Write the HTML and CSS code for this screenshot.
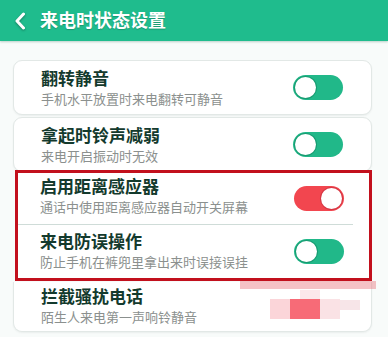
FILE: index.html
```html
<!DOCTYPE html>
<html lang="zh-CN">
<head>
<meta charset="utf-8">
<link rel="stylesheet" href="styles.css">
</head>
<body>
<div class="screen">
  <header class="topbar">
    <svg class="back" width="12" height="18" viewBox="0 0 12 18"><path d="M9.5 2 L3 9 L9.5 16" fill="none" stroke="#fff" stroke-width="3" stroke-linecap="round" stroke-linejoin="round"/></svg>
    <span class="title">来电时状态设置</span>
  </header>
  <main class="list">
    <div class="card row r1">
      <div class="texts"><div class="name">翻转静音</div><div class="desc">手机水平放置时来电翻转可静音</div></div>
      <span class="toggle"><span class="knob"></span></span>
    </div>
    <div class="card row r2">
      <div class="texts"><div class="name">拿起时铃声减弱</div><div class="desc">来电开启振动时无效</div></div>
      <span class="toggle"><span class="knob"></span></span>
    </div>
    <div class="marked">
      <div class="row r3">
        <div class="texts"><div class="name">启用距离感应器</div><div class="desc">通话中使用距离感应器自动开关屏幕</div></div>
        <span class="toggle on"><span class="knob"></span></span>
      </div>
      <div class="sep"></div>
      <div class="row r4">
        <div class="texts"><div class="name">来电防误操作</div><div class="desc">防止手机在裤兜里拿出来时误接误挂</div></div>
        <span class="toggle"><span class="knob"></span></span>
      </div>
    </div>
    <div class="card row r5">
      <div class="texts"><div class="name">拦截骚扰电话</div><div class="desc">陌生人来电第一声响铃静音</div></div>
    </div>
  </main>
  <div class="mosaic">
    <span class="m band"></span>
    <span class="m b1"></span>
    <span class="m b2"></span>
    <span class="m b3"></span>
    <span class="m b4"></span>
    <span class="m b5"></span>
  </div>
</div>
</body>
</html>
```

FILE: styles.css
```css
* { box-sizing: border-box; }
html, body { margin: 0; padding: 0; }
body {
  width: 388px;
  height: 337px;
  overflow: hidden;
  background: #f8fbfa;
  font-family: "Liberation Sans", "Noto Sans CJK SC", sans-serif;
}
.screen { position: relative; width: 388px; height: 337px; }
.topbar {
  height: 41px;
  background: #1fbc8d;
  display: flex;
  align-items: center;
  padding-left: 14px;
  box-shadow: 0 1px 2px rgba(0, 80, 50, 0.25);
}
.back { filter: drop-shadow(0 1px 1px rgba(0,0,0,0.35)); margin-right: 14px; margin-top: 1px; }
.title {
  color: #fff;
  font-size: 18px;
  font-weight: 700;
  line-height: 24px;
  text-shadow: 0 1px 1px rgba(0,0,0,0.2);
}
.list {
  display: flex;
  flex-direction: column;
  padding: 19px 16px 0 13px;
}
.card {
  background: #fff;
  border: 1px solid #e2e8e6;
  border-radius: 9px;
  box-shadow: 0 1px 2px rgba(0, 40, 30, 0.06);
}
.row {
  display: flex;
  align-items: center;
  justify-content: space-between;
  padding-left: 27px;
  padding-right: 28px;
}
.r1 { height: 55px; }
.r2 { height: 55px; margin-top: 2px; }
.name {
  font-size: 17px;
  line-height: 20px;
  font-weight: 700;
  color: #133a2d;
}
.desc {
  font-size: 13px;
  line-height: 20px;
  color: #8b908e;
}
.r1 .texts, .r2 .texts { margin-top: 5px; }
.marked {
  margin-left: 2px;
  border: 3px solid #c2101d;
  background: #fff;
  margin-top: -2px;
}
.marked .row { padding-left: 22px; padding-right: 25px; }
.r3 { height: 51px; }
.r3 .texts { margin-top: -1px; }
.sep { height: 1px; background: #cfdcd8; margin: 0 16px 0 0; }
.r4 { height: 53px; }
.r4 .texts { margin-top: 3px; }
.r5 { height: 50px; margin-top: 1px; border-top: none; border-top-left-radius: 0; border-top-right-radius: 0; }
.r5 .texts { margin-top: 2px; }
.toggle {
  width: 50px;
  height: 25px;
  border-radius: 13px;
  background: #21b889;
  padding: 2px;
  display: flex;
  align-items: center;
  flex: none;
}
.knob {
  width: 21px;
  height: 21px;
  border-radius: 50%;
  background: #fff;
  box-shadow: 0 0 0 1px rgba(0, 90, 60, 0.3);
}
.toggle.on { background: #f2464f; justify-content: flex-end; }
.toggle.on .knob { box-shadow: 0 0 0 1px rgba(150, 20, 40, 0.3); }
.mosaic { position: absolute; left: 0; top: 0; width: 388px; height: 337px; pointer-events: none; }
.m { position: absolute; display: block; }
.band { left: 240px; top: 281px; width: 136px; height: 8px; background: rgba(232, 120, 128, 0.45); }
.b1 { left: 290px; top: 299px; width: 30px; height: 20px; background: rgba(245, 70, 85, 0.8); }
.b2 { left: 270px; top: 299px; width: 20px; height: 20px; background: rgba(245, 150, 160, 0.4); }
.b3 { left: 320px; top: 299px; width: 20px; height: 20px; background: rgba(240, 160, 170, 0.3); }
.b4 { left: 340px; top: 300px; width: 20px; height: 10px; background: rgba(230, 170, 180, 0.3); }
.b5 { left: 300px; top: 290px; width: 20px; height: 9px; background: rgba(245, 180, 190, 0.3); }
```
